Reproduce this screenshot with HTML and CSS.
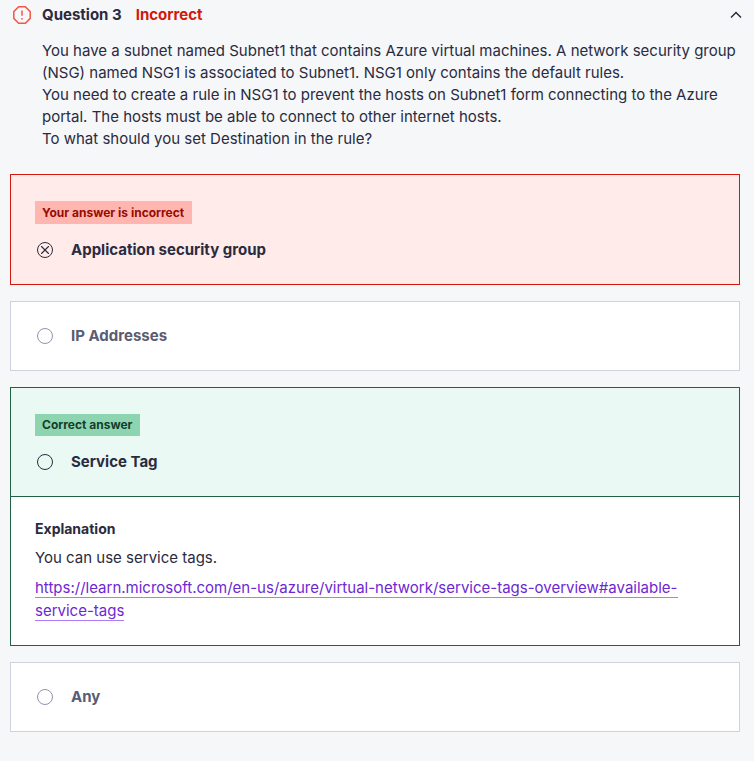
FILE: index.html
```html
<!DOCTYPE html>
<html lang="en">
<head>
<meta charset="utf-8">
<meta name="viewport" content="width=device-width, initial-scale=1">
<title>Question 3</title>
<link rel="stylesheet" href="styles.css">
</head>
<body>
<main class="question">
  <header class="question-header">
    <svg class="status-icon" viewBox="0 0 20 20" aria-hidden="true">
      <path d="M6.6 1.8h6.8l4.8 4.8v6.8l-4.8 4.8H6.6l-4.8-4.8V6.6z"/>
      <path d="M10 5.6v5.2M10 13v1.6"/>
    </svg>
    <h1 class="question-title">Question 3</h1>
    <span class="question-status">Incorrect</span>
    <button class="toggle" type="button" aria-label="Collapse question" aria-expanded="true">
      <svg class="toggle-icon" viewBox="0 0 12 12" aria-hidden="true"><path d="M1 8.5l5-5 5 5"/></svg>
    </button>
  </header>
  <div class="prompt" id="prompt">
    <p>You have a subnet named Subnet1 that contains Azure virtual machines. A network security group (NSG) named NSG1 is associated to Subnet1. NSG1 only contains the default rules.</p>
    <p>You need to create a rule in NSG1 to prevent the hosts on Subnet1 form connecting to the Azure portal. The hosts must be able to connect to other internet hosts.</p>
    <p>To what should you set Destination in the rule?</p>
  </div>
  <div class="answers" role="radiogroup" aria-labelledby="prompt">
    <section class="answer answer-incorrect">
      <div class="answer-body answer-body-badged">
        <span class="badge">Your answer is incorrect</span>
        <label class="option"><input type="radio" name="answer" checked><span>Application security group</span></label>
      </div>
    </section>
    <section class="answer">
      <div class="answer-body">
        <label class="option"><input type="radio" name="answer"><span>IP Addresses</span></label>
      </div>
    </section>
    <section class="answer answer-correct">
      <div class="answer-body answer-body-badged">
        <span class="badge">Correct answer</span>
        <label class="option"><input type="radio" name="answer"><span>Service Tag</span></label>
      </div>
      <div class="explanation">
        <h2 class="explanation-title">Explanation</h2>
        <p>You can use service tags.</p>
        <p><a href="https://learn.microsoft.com/en-us/azure/virtual-network/service-tags-overview#available-service-tags">https://learn.microsoft.com/en-us/azure/virtual-network/service-tags-overview#available-service-tags</a></p>
      </div>
    </section>
    <section class="answer">
      <div class="answer-body">
        <label class="option"><input type="radio" name="answer"><span>Any</span></label>
      </div>
    </section>
  </div>
</main>
</body>
</html>
```
FILE: styles.css
```css
:root {
  --ink: #2a2b3f;
  --muted: #595c73;
  --line: #d1d2e0;
  --red: #d3180c;
  --green: #206344;
  --purple: #6d28d2;
}

* { box-sizing: border-box; }

body {
  margin: 0;
  background: #f6f7f9;
  color: var(--ink);
  font-family: Inter, "Liberation Sans", sans-serif;
  font-size: 15px;
  line-height: 22px;
}

h1, h2, p { margin: 0; }

.question { padding: 4px 14px 28px 10px; }

.question-header {
  display: flex;
  align-items: center;
  height: 21px;
}

.status-icon {
  width: 20px;
  height: 20px;
  margin: 0 10px 0 2px;
  fill: none;
  stroke: #f4574b;
  stroke-width: 1.5;
}

.question-title,
.question-status {
  font-size: 15px;
  font-weight: 700;
}

.question-status {
  margin-left: 14px;
  color: var(--red);
}

.toggle {
  display: flex;
  margin: 0 -2px 0 auto;
  padding: 0;
  border: 0;
  background: none;
}

.toggle-icon {
  width: 12px;
  height: 12px;
  fill: none;
  stroke: var(--ink);
  stroke-width: 1.5;
}

.prompt {
  margin: 15px -8px 24px 0;
  padding-left: 32px;
}

.answers {
  display: flex;
  flex-direction: column;
  gap: 16px;
}

.answer {
  border: 1px solid var(--line);
  background: #fff;
  color: var(--muted);
}

.answer-body { padding: 24px; }

.answer-body-badged {
  display: flex;
  flex-direction: column;
  align-items: flex-start;
  gap: 16px;
  padding-top: 26px;
}

.badge {
  padding: 0 8px 0 7px;
  font-size: 12px;
  font-weight: 700;
  line-height: 22px;
}

.option {
  display: flex;
  align-items: center;
  gap: 16px;
  font-size: 15px;
  font-weight: 700;
  line-height: 20px;
}

.option input {
  flex: none;
  width: 16px;
  height: 16px;
  margin: 0 2px;
  appearance: none;
  border: 1px solid #9194ac;
  border-radius: 50%;
}

.option input:checked {
  background:
    linear-gradient(45deg, transparent 43%, var(--ink) 45% 55%, transparent 57%) center / 8px 8px no-repeat,
    linear-gradient(-45deg, transparent 43%, var(--ink) 45% 55%, transparent 57%) center / 8px 8px no-repeat;
}

.answer-incorrect {
  border-color: var(--red);
  background: #ffebea;
  color: var(--ink);
}

.answer-incorrect .badge {
  background: #ffb6b0;
  color: #960b02;
  line-height: 23px;
}

.answer-correct {
  border-color: var(--green);
  color: var(--ink);
}

.answer-correct .answer-body { background: #eaf9f4; }

.answer-correct .badge {
  background: #8dd5b1;
  color: #153d2b;
}

.answer-incorrect input,
.answer-correct input { border-color: var(--ink); }

.explanation {
  display: flex;
  flex-direction: column;
  gap: 7px;
  padding: 22px 24px 23px;
  border-top: 1px solid var(--green);
  line-height: 23px;
}

.explanation-title {
  font-size: 14px;
  font-weight: 700;
  line-height: 20px;
}

.explanation a {
  border-bottom: 1px solid #b17af5;
  color: var(--purple);
  text-decoration: none;
}
```
